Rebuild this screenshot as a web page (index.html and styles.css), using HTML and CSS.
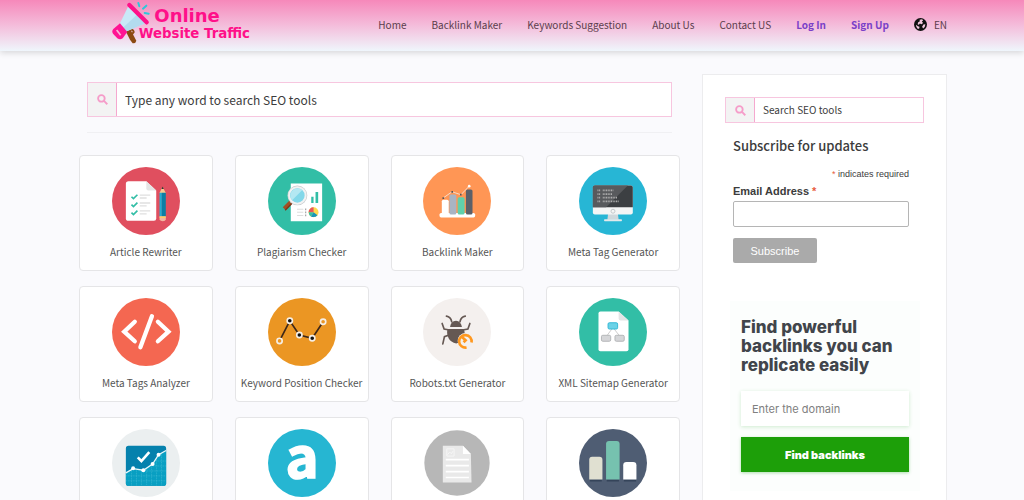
FILE: index.html
```html
<!DOCTYPE html>
<html lang="en">
<head>
<meta charset="utf-8">
<meta name="viewport" content="width=device-width, initial-scale=1">
<title>Online Website Traffic</title>
<link rel="stylesheet" href="styles.css">
</head>
<body>
<header class="site-header">
  <div class="container header-row">
    <a class="logo" href="#">
      <svg viewBox="95 0 420 138" role="img" aria-label="Online Website Traffic">
        <path d="M137 95l12-9 19 36q-2 9-11 8l-8-11z" fill="#8c4a12"/>
        <path d="M148 91q10-5 12 5l-6 8" fill="none" stroke="#8c4a12" stroke-width="6"/>
        <path d="M143 20L198 68L136 95L118 72Z" fill="#c9e8f7"/>
        <path d="M172 42L198 68L136 95L127 84Z" fill="#b3dbee"/>
        <path d="M119 70l22 26-14 19q-8 6-16 0l-13-14q-5-8 1-14z" fill="#ff1493"/>
        <path d="M109 90l12 16" stroke="#f9b3d6" stroke-width="5"/>
        <path d="M147 15L199 67" stroke="#ff1089" stroke-width="13" stroke-linecap="round"/>
        <path d="M174 9l3 10M198 17l-10 9M193 39l12 2" stroke="#2cc8da" stroke-width="6" stroke-linecap="round"/>
        <text class="logo-text" x="222" y="66" font-size="54">Online</text>
        <text class="logo-text" x="175" y="114" font-size="40">Website Traffic</text>
      </svg>
    </a>
    <nav class="nav">
      <a href="#">Home</a>
      <a href="#">Backlink Maker</a>
      <a href="#">Keywords Suggestion</a>
      <a href="#">About Us</a>
      <a href="#">Contact US</a>
      <a class="account" href="#">Log In</a>
      <a class="account" href="#">Sign Up</a>
      <a class="language" href="#">
        <svg viewBox="0 0 40 40" aria-hidden="true"><circle cx="20" cy="20" r="20" fill="#111"/><path d="M17 5l8-1 3 4-4 3 4 4-5 4-5-2-3 4-4-2 2-6 5-3zM29 20l6-1-2 9-5 4-3-5zM6 21l6 4 5 2-1 5-4 2q-6-5-6-13z" fill="#f3c9df"/></svg>
        <span>EN</span>
      </a>
    </nav>
  </div>
</header>

<div class="container page">
  <main class="main">
    <div class="search-wrap">
      <form class="search search-large">
        <label class="search-icon" for="tool-search"><svg viewBox="0 0 30 30" aria-label="Search"><circle cx="12" cy="12" r="9"/><path d="M19 19l9 9"/></svg></label>
        <input id="tool-search" type="text" placeholder="Type any word to search SEO tools">
      </form>
      <hr>
    </div>

    <div class="tools">
      <a class="tool" href="#">
        <svg viewBox="123 64 206 206" aria-hidden="true">
          <circle cx="226" cy="167" r="103" fill="#e04f5f"/>
          <path d="M173 107h54l30 28v85q0 7-7 7h-77q-8 0-8-7V115q0-8 8-8z" fill="#fff"/>
          <path d="M227 107l30 28h-24q-6 0-6-6z" fill="#e5e5e5"/>
          <path d="M182 154l6 6 12-12M182 178l6 6 12-12M182 202l6 6 12-12" fill="none" stroke="#32bea6" stroke-width="5"/>
          <path d="M207 149h32M207 158h21M207 173h32M207 182h21M207 197h32M207 206h21" stroke="#e0e0e0" stroke-width="4"/>
          <path d="M267 143l9-19 10 19z" fill="#f6c98e"/><path d="M273 131l3-8 4 8z" fill="#333"/>
          <path d="M267 142h7v73h-7z" fill="#21aed1"/><path d="M274 142h12v73h-12z" fill="#0b7fa6"/>
          <path d="M267 213h19v10q-1 5-9 5t-10-5z" fill="#f3b6a0"/><path d="M267 214h19v4h-19z" fill="#ffd15c"/>
        </svg>
        <span>Article Rewriter</span>
      </a>
      <a class="tool" href="#">
        <svg viewBox="591 64 206 206" aria-hidden="true">
          <circle cx="694" cy="167" r="103" fill="#32bea6"/>
          <path d="M660 114h95v114h-95z" fill="#fff"/>
          <path d="M722 154h7v19h-7zM735 140h8v33h-8z" fill="#32bea6"/>
          <path d="M679 192h19M679 201h19M679 211h19" stroke="#ddd" stroke-width="3"/>
          <path d="M705 190v24" stroke="#aaa" stroke-width="4" stroke-dasharray="5 4"/>
          <circle cx="729" cy="201" r="15" fill="#ffd94d"/>
          <path d="M729 201v-15a15 15 0 0 0-15 15z" fill="#e8555b"/><path d="M729 201h-15q1 9 7 13z" fill="#35c1a7"/><path d="M729 201l-8 13q12 5 20-4z" fill="#1796bb"/>
          <path d="M662 168l-22 22" stroke="#a24e24" stroke-width="12"/><path d="M664 174l-21 21" stroke="#7d3515" stroke-width="4"/>
          <circle cx="680" cy="150" r="30" fill="#c9cdcf"/>
          <circle cx="680" cy="150" r="25" fill="#83d8e9" stroke="#f2f2f2" stroke-width="6"/>
          <path d="M664 165a22 22 0 0 1 31-31z" fill="#b4e8f2"/>
        </svg>
        <span>Plagiarism Checker</span>
      </a>
      <a class="tool" href="#">
        <svg viewBox="127 64 206 206" aria-hidden="true">
          <circle cx="230" cy="167" r="103" fill="#ff9655"/>
          <rect x="177" y="203" width="108" height="14" rx="5" fill="#fff"/>
          <rect x="184" y="163" width="21" height="44" rx="5" fill="#fff"/>
          <rect x="207" y="147" width="21" height="61" rx="5" fill="#a9b4c3"/>
          <rect x="232" y="156" width="21" height="52" rx="5" fill="#60d0ab"/>
          <rect x="257" y="132" width="20" height="76" rx="5" fill="#5b6069"/>
          <path d="M188 158l27-19 27 9 25-26" fill="none" stroke="#f6dcc9" stroke-width="3"/>
          <path d="M186 156h5v5h-5zM213 137h5v5h-5zM239 145h5v5h-5z" fill="#555"/><circle cx="267" cy="122" r="4" fill="#fff"/>
        </svg>
        <span>Backlink Maker</span>
      </a>
      <a class="tool" href="#">
        <svg viewBox="596 64 206 206" aria-hidden="true">
          <circle cx="699" cy="167" r="103" fill="#27b6d5"/>
          <path d="M684 206h30l2 18h-34z" fill="#cfd8dc"/><rect x="672" y="222" width="54" height="6" rx="2" fill="#e3e9eb"/>
          <rect x="638" y="120" width="121" height="88" rx="6" fill="#f4f5f5"/>
          <path d="M644 120h109q6 0 6 6v60H638v-60q0-6 6-6z" fill="#3c3f42"/>
          <path d="M644 120h100l-66 66h-40v-60q0-6 6-6z" fill="#585a5d"/>
          <path d="M652 135h10m6 0h32M652 146h10m6 0h28M652 157h10m6 0h44M652 168h10m6 0h48" stroke="#b0b0b0" stroke-width="5" stroke-dasharray="3 2"/>
          <circle cx="699" cy="198" r="6" fill="none" stroke="#c4c8ca" stroke-width="3"/>
        </svg>
        <span>Meta Tag Generator</span>
      </a>
      <a class="tool" href="#">
        <svg viewBox="123 52 206 206" aria-hidden="true">
          <circle cx="226" cy="155" r="103" fill="#f46751"/>
          <path d="M192 124l-32 30 32 29M262 124l32 30-32 29M244 107l-35 94" fill="none" stroke="#fff" stroke-width="13" stroke-linecap="round"/>
        </svg>
        <span>Meta Tags Analyzer</span>
      </a>
      <a class="tool" href="#">
        <svg viewBox="591 52 206 206" aria-hidden="true">
          <circle cx="694" cy="155" r="103" fill="#eb9623"/>
          <path d="M626 182l31-61 29 43 39 10 33-50" fill="none" stroke="#3e2718" stroke-width="5"/>
          <g stroke="#f5eee5" stroke-width="5"><g fill="#111"><circle cx="657" cy="121" r="8"/><circle cx="686" cy="164" r="8"/><circle cx="725" cy="174" r="8"/></g><g fill="#eb9623"><circle cx="626" cy="182" r="8"/><circle cx="758" cy="124" r="8"/></g></g>
        </svg>
        <span>Keyword Position Checker</span>
      </a>
      <a class="tool" href="#">
        <svg viewBox="127 52 206 206" aria-hidden="true">
          <circle cx="230" cy="155" r="103" fill="#f4f0ee"/>
          <path d="M198 107q13 2 16 17M255 107q-13 2-16 17M185 129l6 17 16 3M269 129l-6 17-16 3M206 164l-14 5-5 22" fill="none" stroke="#655853" stroke-width="5" stroke-linecap="round"/>
          <path d="M209 140q2-18 18-19 15 1 18 19zM201 146h50q5 18-1 29-9 12-22 15-17-4-23-15-7-12-4-29z" fill="#655853"/>
          <circle cx="256" cy="182" r="24" fill="#f4f0ee"/>
          <path d="M274 187A19 19 0 1 0 259 202M246 171l10 9-6 6" fill="none" stroke="#ff981f" stroke-width="8"/>
        </svg>
        <span>Robots.txt Generator</span>
      </a>
      <a class="tool" href="#">
        <svg viewBox="596 52 206 206" aria-hidden="true">
          <circle cx="699" cy="155" r="103" fill="#32bea6"/>
          <path d="M661 93h55l30 27v87q0 6-6 6h-79q-6 0-6-6V99q0-6 6-6z" fill="#fff"/>
          <path d="M716 93l30 27h-24q-6 0-6-6z" fill="#e3e5e6"/>
          <path d="M697 144l-17 23M701 144l18 23" stroke="#ccc" stroke-width="3"/>
          <rect x="684" y="127" width="29" height="19" rx="4" fill="#6bd2e7" stroke="#35b8d6" stroke-width="3"/>
          <g fill="#d5d6d8" stroke="#b4b6b8" stroke-width="3"><rect x="664" y="165" width="28" height="18" rx="4"/><rect x="705" y="165" width="28" height="18" rx="4"/></g>
        </svg>
        <span>XML Sitemap Generator</span>
      </a>
      <a class="tool" href="#">
        <svg viewBox="123 69 206 206" aria-hidden="true">
          <circle cx="226" cy="172" r="103" fill="#ebeff0"/>
          <rect x="165" y="120" width="122" height="121" rx="8" fill="#0581ad"/>
          <path d="M165 202l22-13 31 5 28-19 18-28 23-13v99q0 8-8 8H173q-8 0-8-8z" fill="#099fc2"/>
          <path d="M182 192v48M197 192v48M212 196v44M228 190v50M243 180v60M258 158v82M273 144v96M258 166h28M248 181h38M224 196h62M166 211h120M166 226h120" stroke="#3eb9d3" stroke-width="2" stroke-dasharray="3 2"/>
          <path d="M165 202l22-13 31 5 28-19 18-28 23-13" fill="none" stroke="#e8f7fa" stroke-width="4"/>
          <g fill="#fff"><circle cx="187" cy="188" r="6"/><circle cx="218" cy="194" r="6"/><circle cx="246" cy="175" r="6"/><circle cx="264" cy="147" r="6"/></g>
          <path d="M201 155l11 11 24-27" fill="none" stroke="#fff" stroke-width="8"/>
        </svg>
        <span>Keywords Suggestion</span>
      </a>
      <a class="tool" href="#">
        <svg viewBox="591 69 206 206" aria-hidden="true">
          <circle cx="694" cy="172" r="103" fill="#26b6d2"/>
          <text class="letter-mark" x="694" y="217" text-anchor="middle" font-size="170">a</text>
        </svg>
        <span>Alexa Rank Checker</span>
      </a>
      <a class="tool" href="#">
        <svg viewBox="128 69 206 206" aria-hidden="true">
          <circle cx="231" cy="172" r="99" fill="#b7b7b7"/>
          <path d="M188 120h61l24 25 2 86h-87z" fill="#e9e9e9"/><path d="M249 120l24 25h-24z" fill="#fff"/>
          <path d="M197 162h70M197 180h70M197 198h70M197 216h70" stroke="#fff" stroke-width="5"/>
          <path d="M200 129h22v22h-22zM202 147l7-8 5 5 5-8" fill="none" stroke="#f6f6f6" stroke-width="3"/>
        </svg>
        <span>Word Counter</span>
      </a>
      <a class="tool" href="#">
        <svg viewBox="596 69 206 206" aria-hidden="true">
          <circle cx="699" cy="172" r="103" fill="#4f5d73"/>
          <path d="M629 222h36v6h-36zM680 222h37v6h-37zM732 222h37v6h-37z" fill="#35445a"/>
          <path d="M627 222v-60q0-9 9-9h22q9 0 9 9v60z" fill="#e0e0d1"/>
          <path d="M678 222V114q0-9 9-9h23q9 0 9 9v108z" fill="#76c2af"/>
          <path d="M730 222v-43q0-10 10-10h20q10 0 10 10v43z" fill="#fff"/>
        </svg>
        <span>PageRank Checker</span>
      </a>
    </div>
  </main>

  <aside class="sidebar">
    <form class="search">
      <label class="search-icon" for="side-search"><svg viewBox="0 0 30 30" aria-label="Search"><circle cx="12" cy="12" r="9"/><path d="M19 19l9 9"/></svg></label>
      <input id="side-search" type="text" placeholder="Search SEO tools">
    </form>
    <form class="subscribe">
      <h2>Subscribe for updates</h2>
      <p class="required-note"><span class="star">*</span> indicates required</p>
      <label for="email">Email Address <span class="star">*</span></label>
      <input id="email" type="email">
      <button type="button">Subscribe</button>
    </form>
    <form class="promo">
      <h2>Find powerful backlinks you can replicate easily</h2>
      <input type="text" placeholder="Enter the domain" aria-label="Enter the domain">
      <button type="button">Find backlinks</button>
    </form>
  </aside>
</div>
</body>
</html>
```
FILE: styles.css
```css
* { box-sizing: border-box; }

body {
  margin: 0;
  background: #fafafd;
  color: #3c3c3c;
  font-family: "Noto Sans CJK SC", "Noto Sans", sans-serif;
  font-size: 10px;
  line-height: 18px;
}

a { color: inherit; text-decoration: none; }
input, button { font: inherit; color: inherit; }

.container {
  max-width: 870px;
  margin: 0 auto;
  padding-left: 2px;
}

.site-header {
  background: linear-gradient(#f688ba, #f4bddb 50%, #eff6fc);
  box-shadow: 0 2px 6px rgba(0, 0, 0, 0.14);
}

.header-row {
  display: flex;
  align-items: center;
  justify-content: space-between;
  height: 51px;
}

.logo { margin-left: 33px; height: 51px; }
.logo svg { display: block; width: 140px; height: 46px; }
.logo-text {
  font-family: "DejaVu Sans", sans-serif;
  font-weight: 700;
  fill: #ff1089;
}

.nav {
  display: flex;
  align-items: center;
  gap: 25px;
  padding-bottom: 2px;
  color: #5b3d4c;
  white-space: nowrap;
}
.account { color: #7a40c8; font-weight: 700; }
.language { display: flex; align-items: center; gap: 7px; }
.language svg { width: 13px; height: 13px; }

.page {
  display: flex;
  align-items: flex-start;
  gap: 22px;
  padding-top: 23px;
}

.main { flex: 1; min-width: 0; }

.search-wrap { padding: 8px 8px 0; }
.search-wrap hr { margin: 15px 0 22px; border: 0; border-top: 1px solid #f0f0f3; }

.search {
  display: flex;
  height: 26px;
  border: 1px solid #f7c6df;
  background: #fff;
}
.search-large { height: 35px; }
.search-icon {
  display: flex;
  flex: none;
  align-items: center;
  justify-content: center;
  width: 29px;
  border-right: 1px solid #f5a8cf;
  background: #f3f3f3;
}
.search-icon svg { width: 11px; height: 11px; fill: none; stroke: #f59cc9; stroke-width: 5; }
.search input {
  flex: 1;
  min-width: 0;
  padding: 0 8px;
  border: 0;
  background: transparent;
}
.search-large input { font-size: 12px; }
.search input::placeholder { color: #3c3c3c; opacity: 1; }

.tools {
  display: grid;
  grid-template-columns: repeat(4, minmax(0, 1fr));
  gap: 15px 22px;
}
.tool {
  display: flex;
  flex-direction: column;
  align-items: center;
  gap: 8px;
  padding: 11px 0 9px;
  border: 1px solid #e5e5e7;
  border-radius: 4px;
  background: #fff;
  color: #555;
  white-space: nowrap;
}
.tool svg { width: 68px; height: 68px; }
.letter-mark {
  font-family: "Noto Sans CJK SC", sans-serif;
  font-weight: 700;
  fill: #fff;
  stroke: #fff;
  stroke-width: 5;
}

.sidebar {
  flex: 0 0 245px;
  padding: 22px;
  border: 1px solid #ececee;
  background: #fff;
}

.subscribe {
  padding: 12px 15px 0 8px;
  font-family: "Liberation Sans", Arial, sans-serif;
}
.subscribe h2 {
  margin: 0 0 11px;
  font-family: "Noto Sans CJK SC", sans-serif;
  font-size: 13px;
  font-weight: 500;
  line-height: 22px;
}
.required-note { margin: 0 0 3px; font-size: 9px; line-height: 12px; text-align: right; }
.star { color: #e85c41; }
.subscribe label { display: block; font-size: 11px; font-weight: 700; line-height: 16px; }
.subscribe input {
  display: block;
  width: 100%;
  height: 26px;
  margin: 2px 0 11px;
  border: 1px solid #b5b5b5;
  border-radius: 2px;
  background: #fff;
}
.subscribe button {
  display: block;
  width: 84px;
  height: 25px;
  padding: 0;
  border: 0;
  border-radius: 2px;
  background: #aaa;
  color: #fff;
  font-size: 11px;
}

.promo {
  display: grid;
  gap: 11px;
  margin: 38px 4px 0 5px;
  padding: 17px 11px 19px;
  background: #fcfefd;
  font-family: Inter, "Open Sans", sans-serif;
  font-size: 11px;
}
.promo h2 { margin: 0 0 5px; color: #41454b; font-size: 17px; font-weight: 800; line-height: 19px; }
.promo input {
  width: 100%;
  height: 35px;
  padding: 0 11px;
  border: 0;
  background: #fff;
  box-shadow: 0 1px 4px rgba(30, 160, 30, 0.2);
}
.promo input::placeholder { color: #808080; opacity: 1; }
.promo button {
  height: 35px;
  border: 0;
  background: #1d9f09;
  box-shadow: 0 1px 3px rgba(30, 160, 30, 0.35);
  color: #fff;
  font-weight: 900;
}
```
